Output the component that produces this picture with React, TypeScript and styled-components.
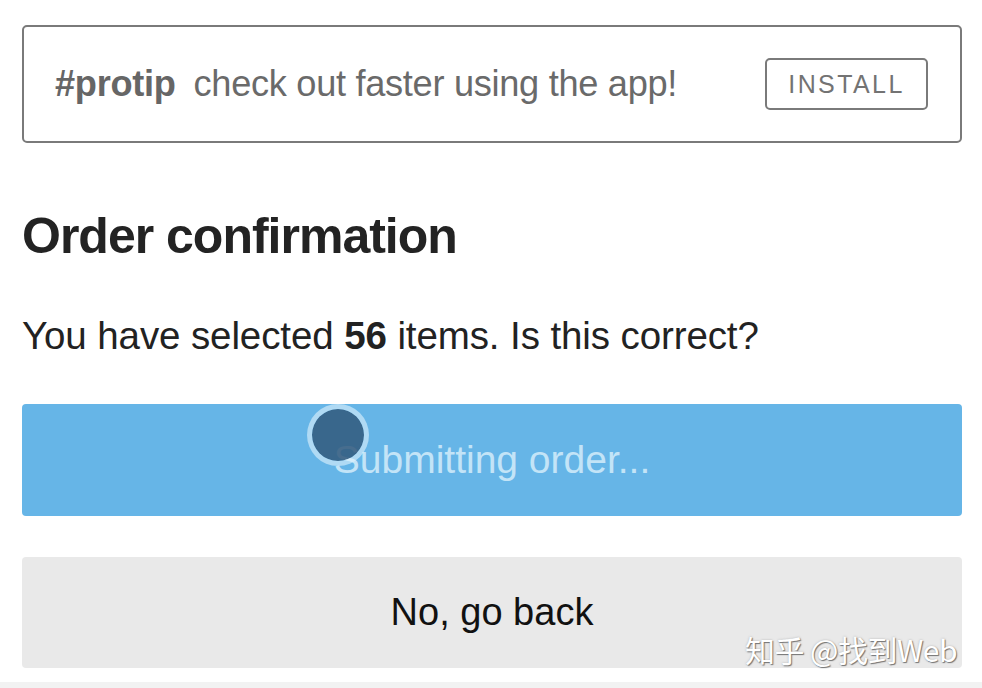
import React from "react";
import styled, { createGlobalStyle } from "styled-components";

const GlobalStyle = createGlobalStyle`
  html, body { margin: 0; padding: 0; background: #ffffff; }
  body { font-family: "Liberation Sans", Arial, sans-serif; }
  * { box-sizing: border-box; }
`;

const Page = styled.div`
  position: relative;
  width: 982px;
  height: 688px;
  overflow: hidden;
  background: #ffffff;
  display: flex;
  flex-direction: column;
`;

const Content = styled.main`
  flex: 1;
  padding: 25px 20px 0 22px;
  display: flex;
  flex-direction: column;
`;

const Banner = styled.section`
  height: 118px;
  border: 2px solid #7a7a7a;
  border-radius: 5px;
  display: flex;
  align-items: center;
  justify-content: space-between;
  padding: 0 32px 0 31px;
`;

const Tip = styled.p`
  margin: 0;
  font-size: 36.2px;
  color: #6a6a6a;
  letter-spacing: -0.3px;
`;

const Tag = styled.strong`
  font-weight: 700;
  color: #666666;
  margin-right: 18px;
`;

const InstallButton = styled.button`
  width: 163px;
  height: 52px;
  border: 2px solid #7a7a7a;
  border-radius: 5px;
  background: #ffffff;
  color: #737373;
  font-family: "Liberation Sans", Arial, sans-serif;
  font-size: 25px;
  letter-spacing: 2.4px;
  padding: 0;
  display: flex;
  align-items: center;
  justify-content: center;
`;

const Heading = styled.h1`
  margin: 63px 0 0;
  font-size: 50px;
  line-height: 60px;
  font-weight: 700;
  letter-spacing: -1px;
  color: #232323;
`;

const Question = styled.p`
  margin: 48px 0 0;
  font-size: 38.5px;
  line-height: 44px;
  color: #222222;
  letter-spacing: -0.1px;
`;

const Count = styled.b`
  font-weight: 700;
`;

const ActionButton = styled.button<{ $variant: "primary" | "secondary" }>`
  position: relative;
  width: 940px;
  height: ${(p) => (p.$variant === "primary" ? "112px" : "111px")};
  margin-top: ${(p) => (p.$variant === "primary" ? "46px" : "41px")};
  border: none;
  border-radius: 4px;
  padding: 0;
  display: flex;
  align-items: center;
  justify-content: center;
  font-family: "Liberation Sans", Arial, sans-serif;
  font-size: ${(p) => (p.$variant === "primary" ? "39px" : "38px")};
  background: ${(p) => (p.$variant === "primary" ? "#66b5e7" : "#e9e9e9")};
  color: ${(p) => (p.$variant === "primary" ? "#c3e4f7" : "#111111")};
`;

const TouchIndicator = styled.span`
  position: absolute;
  left: 285px;
  top: 0px;
  width: 62px;
  height: 62px;
  border-radius: 50%;
  border: 5px solid rgba(225, 243, 254, 0.6);
  background: rgba(50, 90, 125, 0.86);
  background-clip: padding-box;
`;

const BottomStrip = styled.div`
  height: 6px;
  background: #f2f2f2;
`;

const Watermark = styled.div`
  position: absolute;
  right: 25px;
  bottom: 22px;
  font-family: "Noto Sans CJK SC", "Liberation Sans", sans-serif;
  font-size: 30px;
  line-height: 34px;
  color: #ffffff;
  text-shadow: 1px 1px 1px rgba(90, 90, 90, 0.8), 0 0 2px rgba(120, 120, 120, 0.5);
  letter-spacing: -0.5px;
`;

export default function App() {
  return (
    <>
      <GlobalStyle />
      <Page>
        <Content>
          <Banner>
            <Tip>
              <Tag>#protip</Tag>check out faster using the app!
            </Tip>
            <InstallButton>INSTALL</InstallButton>
          </Banner>
          <Heading>Order confirmation</Heading>
          <Question>
            You have selected <Count>56</Count> items. Is this correct?
          </Question>
          <ActionButton $variant="primary">
            Submitting order...
            <TouchIndicator />
          </ActionButton>
          <ActionButton $variant="secondary">No, go back</ActionButton>
        </Content>
        <BottomStrip />
        <Watermark>知乎 @找到Web</Watermark>
      </Page>
    </>
  );
}
